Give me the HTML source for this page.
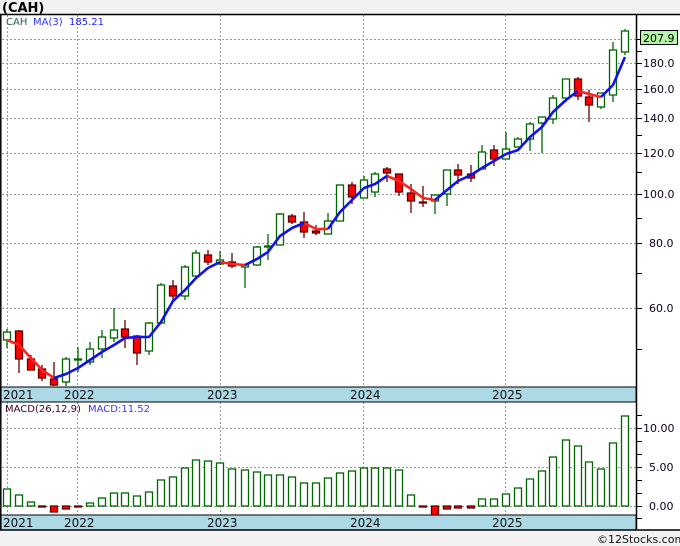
<!DOCTYPE html>
<html><head><meta charset="utf-8"><style>
html,body{margin:0;padding:0;background:#f2f2f2;}
svg{display:block;font-family:"DejaVu Sans","Liberation Sans",sans-serif;}
</style></head><body>
<svg width="680" height="546" viewBox="0 0 680 546" xmlns="http://www.w3.org/2000/svg">
<rect x="0" y="0" width="680" height="546" fill="#f2f2f2"/>
<text x="2" y="12" font-size="13" font-weight="bold" fill="#000">(CAH)</text>
<rect x="0" y="14" width="680" height="516" fill="#fff"/>
<!-- grids -->
<g stroke="#999" stroke-dasharray="2,2" stroke-width="1">
<line x1="2" y1="39.5" x2="636" y2="39.5"/><line x1="2" y1="63.5" x2="636" y2="63.5"/><line x1="2" y1="89.5" x2="636" y2="89.5"/><line x1="2" y1="118.5" x2="636" y2="118.5"/><line x1="2" y1="153.5" x2="636" y2="153.5"/><line x1="2" y1="194.5" x2="636" y2="194.5"/><line x1="2" y1="243.5" x2="636" y2="243.5"/><line x1="2" y1="308.5" x2="636" y2="308.5"/>
<line x1="7.5" y1="15" x2="7.5" y2="387"/><line x1="77.5" y1="15" x2="77.5" y2="387"/><line x1="220.5" y1="15" x2="220.5" y2="387"/><line x1="363.5" y1="15" x2="363.5" y2="387"/><line x1="505.5" y1="15" x2="505.5" y2="387"/>
<line x1="2" y1="428.5" x2="636" y2="428.5"/><line x1="2" y1="467.5" x2="636" y2="467.5"/><line x1="2" y1="506.5" x2="636" y2="506.5"/>
<line x1="7.5" y1="402" x2="7.5" y2="515"/><line x1="77.5" y1="402" x2="77.5" y2="515"/><line x1="220.5" y1="402" x2="220.5" y2="515"/><line x1="363.5" y1="402" x2="363.5" y2="515"/><line x1="505.5" y1="402" x2="505.5" y2="515"/>
</g>
<text x="6" y="25" font-size="10" fill="#264">CAH</text>
<text x="33" y="25" font-size="10" fill="#33f">MA(3)</text>
<text x="69" y="25" font-size="10" fill="#22f">185.21</text>
<!-- green candles -->
<g stroke="#060" fill="#fff" stroke-width="1.3">
<line x1="7" y1="329" x2="7" y2="348"/><rect x="3.5" y="332" width="7" height="8"/>
<line x1="66" y1="357" x2="66" y2="386"/><rect x="62.5" y="359" width="7" height="23"/>
<line x1="78" y1="347" x2="78" y2="372"/><rect x="74.5" y="359" width="7" height="1"/>
<line x1="90" y1="342" x2="90" y2="365"/><rect x="86.5" y="349" width="7" height="13"/>
<line x1="102" y1="330" x2="102" y2="358"/><rect x="98.5" y="337" width="7" height="12"/>
<line x1="114" y1="308" x2="114" y2="342"/><rect x="110.5" y="330" width="7" height="8"/>
<line x1="149" y1="322" x2="149" y2="355"/><rect x="145.5" y="323" width="7" height="28"/>
<line x1="161" y1="283" x2="161" y2="324"/><rect x="157.5" y="285" width="7" height="38"/>
<line x1="185" y1="265" x2="185" y2="300"/><rect x="181.5" y="267" width="7" height="29"/>
<line x1="196" y1="250" x2="196" y2="277"/><rect x="192.5" y="253" width="7" height="23"/>
<line x1="220" y1="251" x2="220" y2="265"/><rect x="216.5" y="260" width="7" height="4"/>
<line x1="245" y1="265" x2="245" y2="288"/><rect x="241.5" y="265" width="7" height="2"/>
<line x1="257" y1="246" x2="257" y2="266"/><rect x="253.5" y="247" width="7" height="18"/>
<line x1="268" y1="234" x2="268" y2="260"/><rect x="264.5" y="246" width="7" height="1"/>
<line x1="280" y1="213" x2="280" y2="245"/><rect x="276.5" y="214" width="7" height="31"/>
<line x1="328" y1="213" x2="328" y2="234"/><rect x="324.5" y="221" width="7" height="13"/>
<line x1="340" y1="185" x2="340" y2="221"/><rect x="336.5" y="185" width="7" height="36"/>
<line x1="364" y1="176" x2="364" y2="198"/><rect x="360.5" y="180" width="7" height="18"/>
<line x1="375" y1="172" x2="375" y2="197"/><rect x="371.5" y="174" width="7" height="18"/>
<line x1="435" y1="195" x2="435" y2="214"/><rect x="431.5" y="195" width="7" height="6"/>
<line x1="447" y1="170" x2="447" y2="206"/><rect x="443.5" y="170" width="7" height="24"/>
<line x1="482" y1="145" x2="482" y2="169"/><rect x="478.5" y="152" width="7" height="17"/>
<line x1="506" y1="132" x2="506" y2="159"/><rect x="502.5" y="149" width="7" height="10"/>
<line x1="518" y1="137" x2="518" y2="147"/><rect x="514.5" y="139" width="7" height="8"/>
<line x1="530" y1="122" x2="530" y2="151"/><rect x="526.5" y="124" width="7" height="15"/>
<line x1="542" y1="117" x2="542" y2="153"/><rect x="538.5" y="117" width="7" height="6"/>
<line x1="553" y1="95" x2="553" y2="124"/><rect x="549.5" y="98" width="7" height="21"/>
<line x1="566" y1="79" x2="566" y2="102"/><rect x="562.5" y="79" width="7" height="19"/>
<line x1="601" y1="93" x2="601" y2="109"/><rect x="597.5" y="93" width="7" height="14"/>
<line x1="613" y1="42" x2="613" y2="102"/><rect x="609.5" y="50" width="7" height="45"/>
<line x1="625" y1="29" x2="625" y2="55"/><rect x="621.5" y="31" width="7" height="21"/>
</g>
<!-- red candles -->
<g stroke="#600" fill="#f00" stroke-width="1.3">
<line x1="19" y1="330" x2="19" y2="373"/><rect x="15.5" y="331" width="7" height="28"/>
<line x1="31" y1="355" x2="31" y2="370"/><rect x="27.5" y="359" width="7" height="11"/>
<line x1="42" y1="365" x2="42" y2="381"/><rect x="38.5" y="369" width="7" height="9"/>
<line x1="54" y1="362" x2="54" y2="386"/><rect x="50.5" y="379" width="7" height="6"/>
<line x1="125" y1="320" x2="125" y2="348"/><rect x="121.5" y="329" width="7" height="8"/>
<line x1="137" y1="335" x2="137" y2="365"/><rect x="133.5" y="336" width="7" height="17"/>
<line x1="173" y1="280" x2="173" y2="300"/><rect x="169.5" y="286" width="7" height="10"/>
<line x1="208" y1="250" x2="208" y2="265"/><rect x="204.5" y="255" width="7" height="7"/>
<line x1="232" y1="253" x2="232" y2="268"/><rect x="228.5" y="262" width="7" height="4"/>
<line x1="292" y1="214" x2="292" y2="224"/><rect x="288.5" y="216" width="7" height="6"/>
<line x1="304" y1="212" x2="304" y2="238"/><rect x="300.5" y="222" width="7" height="10"/>
<line x1="316" y1="225" x2="316" y2="235"/><rect x="312.5" y="231" width="7" height="2"/>
<line x1="352" y1="182" x2="352" y2="204"/><rect x="348.5" y="185" width="7" height="12"/>
<line x1="387" y1="167" x2="387" y2="182"/><rect x="383.5" y="169" width="7" height="4"/>
<line x1="399" y1="174" x2="399" y2="196"/><rect x="395.5" y="174" width="7" height="18"/>
<line x1="411" y1="184" x2="411" y2="213"/><rect x="407.5" y="193" width="7" height="8"/>
<line x1="423" y1="186" x2="423" y2="207"/><rect x="419.5" y="202" width="7" height="1"/>
<line x1="458" y1="164" x2="458" y2="184"/><rect x="454.5" y="170" width="7" height="5"/>
<line x1="471" y1="165" x2="471" y2="182"/><rect x="467.5" y="174" width="7" height="4"/>
<line x1="494" y1="145" x2="494" y2="166"/><rect x="490.5" y="150" width="7" height="9"/>
<line x1="578" y1="77" x2="578" y2="100"/><rect x="574.5" y="79" width="7" height="17"/>
<line x1="589" y1="90" x2="589" y2="122"/><rect x="585.5" y="97" width="7" height="8"/>
</g>
<!-- MA -->
<g fill="none" stroke-width="2.6" stroke-linejoin="round">
<polyline stroke="#f22" points="7,340 19,345 31,358 42,370 54,378"/>
<polyline stroke="#f22" points="220,262 232,264 245,265"/>
<polyline stroke="#f22" points="304,223 316,229 328,229"/>
<polyline stroke="#f22" points="387,176 399,181 411,189 423,198 435,200"/>
<polyline stroke="#f22" points="578,91 589,94 601,97"/>
<polyline stroke="#11e" points="54,378 66,374 78,368 90,360 102,352 114,345 125,338 137,337 149,337 161,322 173,301 185,290 196,278 208,268 220,262"/>
<polyline stroke="#11e" points="245,265 257,259 268,252 280,236 292,228 304,223"/>
<polyline stroke="#11e" points="328,229 340,212 352,200 364,188 375,184 387,176"/>
<polyline stroke="#11e" points="435,200 447,190 458,181 471,175 482,168 494,161 506,154 518,150 530,137 542,127 553,112 566,100 578,91"/>
<polyline stroke="#11e" points="601,97 613,85 625,57"/>
</g>
<!-- date strips -->
<rect x="0" y="387" width="636" height="15" fill="#add8e6" stroke="#000"/>
<rect x="0" y="515" width="636" height="15" fill="#add8e6" stroke="#000"/>
<g font-size="12" fill="#111">
<text x="3" y="399">2021</text><text x="64" y="399">2022</text><text x="207" y="399">2023</text><text x="350" y="399">2024</text><text x="492" y="399">2025</text>
<text x="3" y="527">2021</text><text x="64" y="527">2022</text><text x="207" y="527">2023</text><text x="350" y="527">2024</text><text x="492" y="527">2025</text>
</g>
<!-- MACD -->
<text x="5" y="412" font-size="10" fill="#402">MACD(26,12,9)</text>
<text x="88" y="412" font-size="10" fill="#43f">MACD:11.52</text>
<g stroke="#060" fill="#fff" stroke-width="1.3">
<rect x="3.5" y="489" width="7" height="17"/><rect x="15.5" y="495" width="7" height="11"/><rect x="27.5" y="502" width="7" height="4"/>
<rect x="86.5" y="503" width="7" height="3"/><rect x="98.5" y="498" width="7" height="8"/><rect x="110.5" y="493" width="7" height="13"/><rect x="121.5" y="493" width="7" height="13"/><rect x="133.5" y="496" width="7" height="10"/><rect x="145.5" y="492" width="7" height="14"/><rect x="157.5" y="480" width="7" height="26"/><rect x="169.5" y="477" width="7" height="29"/><rect x="181.5" y="468" width="7" height="38"/><rect x="192.5" y="460" width="7" height="46"/><rect x="204.5" y="461" width="7" height="45"/><rect x="216.5" y="463" width="7" height="43"/><rect x="228.5" y="469" width="7" height="37"/>
<rect x="241.5" y="470" width="7" height="36"/><rect x="253.5" y="472" width="7" height="34"/><rect x="264.5" y="475" width="7" height="31"/><rect x="276.5" y="475" width="7" height="31"/><rect x="288.5" y="477" width="7" height="29"/><rect x="300.5" y="483" width="7" height="23"/><rect x="312.5" y="483" width="7" height="23"/><rect x="324.5" y="478" width="7" height="28"/><rect x="336.5" y="473" width="7" height="33"/><rect x="348.5" y="471" width="7" height="35"/><rect x="360.5" y="468" width="7" height="38"/><rect x="371.5" y="468" width="7" height="38"/><rect x="383.5" y="468" width="7" height="38"/><rect x="395.5" y="470" width="7" height="36"/><rect x="407.5" y="495" width="7" height="11"/>
<rect x="478.5" y="499" width="7" height="7"/><rect x="490.5" y="499" width="7" height="7"/><rect x="502.5" y="494" width="7" height="12"/><rect x="514.5" y="488" width="7" height="18"/><rect x="526.5" y="479" width="7" height="27"/><rect x="538.5" y="471" width="7" height="35"/><rect x="549.5" y="457" width="7" height="49"/><rect x="562.5" y="440" width="7" height="66"/><rect x="574.5" y="446" width="7" height="60"/><rect x="585.5" y="462" width="7" height="44"/><rect x="597.5" y="469" width="7" height="37"/><rect x="609.5" y="443" width="7" height="63"/><rect x="621.5" y="416" width="7" height="90"/>
</g>
<g stroke="#600" fill="#f00" stroke-width="1.3">
<rect x="38.5" y="506" width="7" height="1"/><rect x="50.5" y="506" width="7" height="6"/><rect x="62.5" y="506" width="7" height="3"/><rect x="74.5" y="506" width="7" height="1"/>
<rect x="419.5" y="506" width="7" height="1"/><rect x="431.5" y="506" width="7" height="9"/><rect x="443.5" y="506" width="7" height="3"/><rect x="454.5" y="506" width="7" height="2"/><rect x="467.5" y="506" width="7" height="2"/>
</g>
<!-- frame -->
<g stroke="#000" stroke-width="1.5" fill="none">
<line x1="0" y1="14.5" x2="680" y2="14.5"/>
<line x1="0.8" y1="14" x2="0.8" y2="530"/>
<line x1="636.5" y1="14" x2="636.5" y2="530"/>
<line x1="0" y1="530" x2="680" y2="530"/>
</g>
<g stroke="#000" stroke-width="1">
<line x1="636" y1="39.5" x2="642" y2="39.5"/><line x1="636" y1="51.5" x2="642" y2="51.5"/><line x1="636" y1="63.5" x2="642" y2="63.5"/><line x1="636" y1="76.5" x2="642" y2="76.5"/><line x1="636" y1="89.5" x2="642" y2="89.5"/><line x1="636" y1="103.5" x2="642" y2="103.5"/><line x1="636" y1="118.5" x2="642" y2="118.5"/><line x1="636" y1="135.5" x2="642" y2="135.5"/><line x1="636" y1="153.5" x2="642" y2="153.5"/><line x1="636" y1="172.5" x2="642" y2="172.5"/><line x1="636" y1="194.5" x2="642" y2="194.5"/><line x1="636" y1="218.5" x2="642" y2="218.5"/><line x1="636" y1="243.5" x2="642" y2="243.5"/><line x1="636" y1="273.5" x2="642" y2="273.5"/><line x1="636" y1="308.5" x2="642" y2="308.5"/><line x1="636" y1="349.5" x2="642" y2="349.5"/>
<line x1="636" y1="415.5" x2="642" y2="415.5"/><line x1="636" y1="428.5" x2="642" y2="428.5"/><line x1="636" y1="441.5" x2="642" y2="441.5"/><line x1="636" y1="454.5" x2="642" y2="454.5"/><line x1="636" y1="467.5" x2="642" y2="467.5"/><line x1="636" y1="480.5" x2="642" y2="480.5"/><line x1="636" y1="493.5" x2="642" y2="493.5"/><line x1="636" y1="506.5" x2="642" y2="506.5"/><line x1="636" y1="518.5" x2="642" y2="518.5"/>
</g>
<g font-size="11" fill="#102">
<text x="643" y="67">180.0</text><text x="643" y="93">160.0</text><text x="643" y="122">140.0</text><text x="643" y="157">120.0</text><text x="643" y="198">100.0</text><text x="649" y="247">80.0</text><text x="649" y="312">60.0</text>
<text x="643" y="432">10.00</text><text x="649" y="471">5.00</text><text x="649" y="510">0.00</text>
</g>
<rect x="640.5" y="30.5" width="37" height="14" fill="#b4f5a8" stroke="#000"/>
<text x="643" y="42" font-size="11" fill="#000">207.9</text>
<text x="597" y="543" font-size="11" fill="#111">©12Stocks.com</text>
</svg>
</body></html>
